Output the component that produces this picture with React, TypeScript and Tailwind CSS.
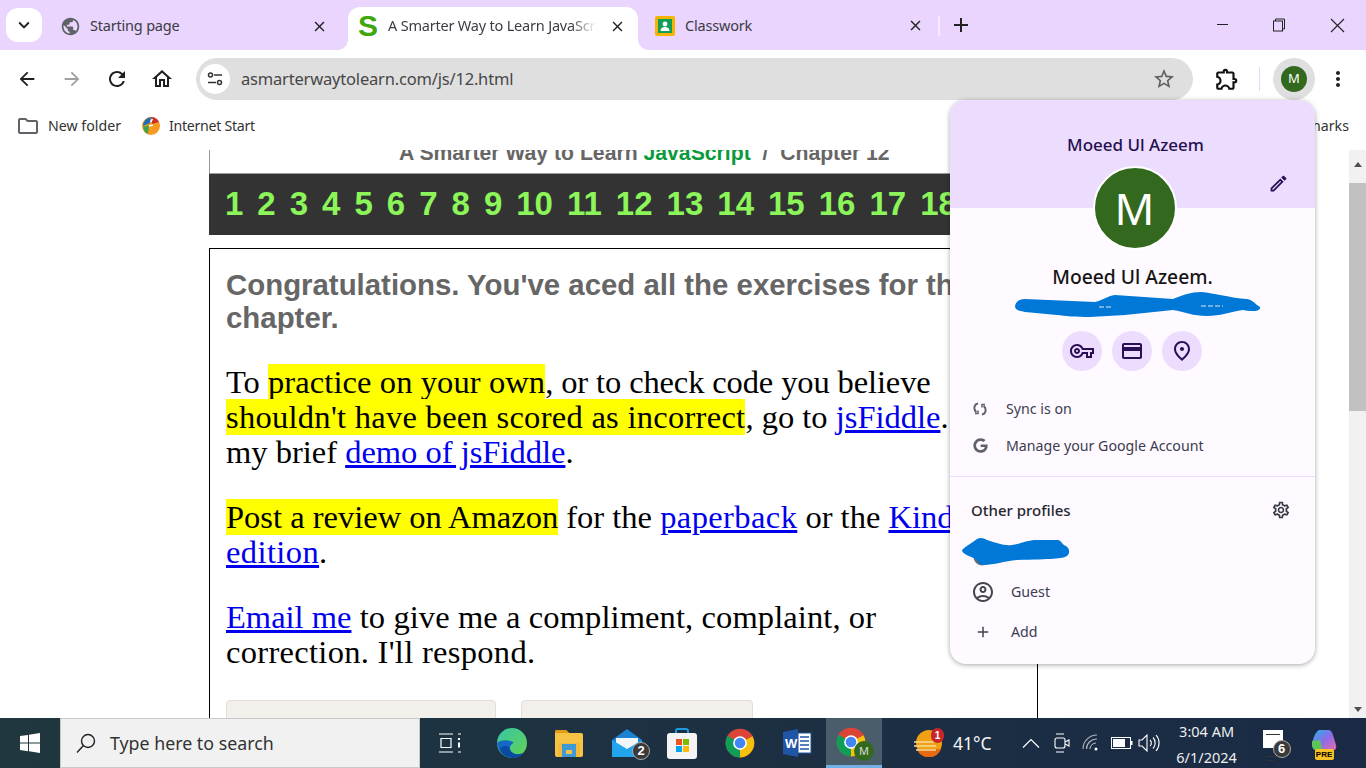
import React from "react";
import { MdArrowBack, MdArrowForward, MdRefresh, MdOutlineHome, MdStarBorder, MdOutlineExtension, MdMoreVert, MdClose, MdAdd, MdOutlineFolder, MdPublic, MdExpandMore, MdOutlineEdit, MdOutlineVpnKey, MdOutlineCreditCard, MdOutlinePlace, MdOutlineSettings, MdOutlineAccountCircle } from "react-icons/md";
import { FaGoogle } from "react-icons/fa";

const ui = "font-['Noto_Sans',sans-serif]";

function Chrome({ size = 28 }: { size?: number }) {
  return (
    <svg width={size} height={size} viewBox="0 0 48 48">
      <circle cx="24" cy="24" r="23" fill="#db4437" />
      <path d="M24 24 L44 13 A23 23 0 0 1 24 47 Z" fill="#f4c20d" />
      <path d="M24 24 L24 47 A23 23 0 0 1 4 12.5 Z" fill="#0f9d58" />
      <circle cx="24" cy="24" r="11" fill="#fff" />
      <circle cx="24" cy="24" r="8.5" fill="#4285f4" />
    </svg>
  );
}

function CircleBtn({ children }: { children: React.ReactNode }) {
  return <div className="w-[40px] h-[40px] rounded-full bg-[#ecdcfe] flex items-center justify-center text-[#2a0f57]">{children}</div>;
}

function Badge({ n, cls }: { n: string; cls: string }) {
  return <span className={`absolute w-[18px] h-[18px] rounded-full bg-[#3a3a3a] border border-[#aaa] text-white text-[13px] font-bold leading-[16px] text-center font-['Liberation_Sans',sans-serif] ${cls}`}>{n}</span>;
}

const nums = Array.from({ length: 19 }, (_, i) => i + 1);

export default function App() {
  return (
    <div className={`relative w-[1366px] h-[768px] overflow-hidden bg-white flex flex-col ${ui}`}>
      {/* Tab strip */}
      <div className="h-[50px] shrink-0 bg-[#e9d5fd] flex items-start text-[14.5px] tracking-[-0.2px] text-[#3c3c44]">
        <div className="ml-[6px] mt-[8px] w-[36px] h-[34px] rounded-[12px] bg-white flex items-center justify-center text-[#222]">
          <MdExpandMore size={22} />
        </div>
        <div className="ml-[18px] w-[288px] h-[50px] pt-[2px] flex items-center pr-[20px]">
          <MdPublic size={21} className="text-[#5f6368]" />
          <span className="ml-[9px] flex-1">Starting page</span>
          <MdClose size={17} className="text-[#222]" />
        </div>
        <div className="relative w-[290px] h-[43px] mt-[7px] bg-white rounded-t-[12px] flex items-center pl-[9px] pr-[10px] pb-[5px]">
          <span className="absolute -left-[10px] bottom-0 w-[10px] h-[10px] bg-[radial-gradient(circle_at_0_0,transparent_9.5px,white_10px)]" />
          <span className="absolute -right-[10px] bottom-0 w-[10px] h-[10px] bg-[radial-gradient(circle_at_100%_0,transparent_9.5px,white_10px)]" />
          <span className="w-[22px] text-center text-[#3fa70d] text-[30px] font-bold leading-none font-['Liberation_Sans',sans-serif]">S</span>
          <span className="ml-[9px] w-[208px] overflow-hidden whitespace-nowrap [mask-image:linear-gradient(to_right,black_88%,transparent)]">A Smarter Way to Learn JavaScript</span>
          <MdClose size={17} className="ml-[13px] text-[#222]" />
        </div>
        <div className="ml-[17px] w-[276px] h-[50px] pt-[1px] flex items-center">
          <svg width="20" height="20" viewBox="0 0 20 20">
            <rect width="20" height="20" rx="2" fill="#f4b400" />
            <rect x="3" y="3" width="14" height="14" fill="#0f9d58" />
            <circle cx="10" cy="8" r="2.4" fill="#fff" />
            <path d="M5.5 15c0-3 2-4 4.5-4s4.500 1 4.500 4z" fill="#fff" />
          </svg>
          <span className="ml-[10px] flex-1">Classwork</span>
          <MdClose size={17} className="mr-[7px] text-[#222]" />
        </div>
        <div className="ml-[7px] mt-[16px] w-[2px] h-[20px] bg-[#f4ecff]" />
        <MdAdd size={24} className="ml-[9px] mt-[13px] text-[#222]" />
        <div className="ml-auto h-[50px] flex items-center">
          <div className="w-[56px] pr-[4px] flex justify-center pb-[1px]">
            <div className="w-[11px] h-px bg-[#222]" />
          </div>
          <div className="w-[56px] pr-[2px] flex justify-center">
            <svg width="14" height="14" viewBox="0 0 14 14" fill="none" stroke="#222">
              <rect x="1.500" y="3" width="9" height="10" />
              <path d="M3.500 3V1h9v10h-2" />
            </svg>
          </div>
          <div className="w-[58px] pl-[1px] flex justify-center">
            <svg width="15" height="15" viewBox="0 0 15 15" stroke="#222" strokeWidth="1.100">
              <path d="M1 1l13 13M14 1L1 14" />
            </svg>
          </div>
        </div>
      </div>

      {/* Toolbar */}
      <div className="h-[58px] shrink-0 bg-white rounded-t-[8px] flex items-center relative">
        <MdArrowBack size={22} className="ml-[16px] text-[#1f1f1f]" />
        <MdArrowForward size={22} className="ml-[23px] text-[#a0a0a0]" />
        <MdRefresh size={24} className="ml-[22px] text-[#1f1f1f]" />
        <MdOutlineHome size={24} className="ml-[21px] text-[#1f1f1f]" />
        <div className="ml-[22px] w-[997px] h-[42px] rounded-full bg-[#dfdfdf] flex items-center pl-[4px] pr-[17px]">
          <div className="w-[30px] h-[30px] rounded-full bg-white flex items-center justify-center">
            <svg width="16" height="14" viewBox="0 0 16 14" fill="none" stroke="#333" strokeWidth="1.500">
              <circle cx="3.500" cy="3" r="2" />
              <path d="M7 3h8M1 10.500h8" />
              <circle cx="12.500" cy="10.500" r="2" />
            </svg>
          </div>
          <span className="ml-[11px] flex-1 text-[16.5px] tracking-[-0.19px] text-[#474747]">asmarterwaytolearn.com/js/12.html</span>
          <MdStarBorder size={24} className="text-[#5f5f5f]" />
        </div>
        <MdOutlineExtension size={26} className="ml-[21px] text-[#111]" />
        <div className="ml-[19px] w-px h-[24px] bg-[#e9d5fd]" />
        <div className="ml-[13px] w-[42px] h-[42px] rounded-full bg-[#dfdfdf] flex items-center justify-center">
          <div className="w-[26px] h-[26px] rounded-full bg-[#33691e] text-white text-[13px] flex items-center justify-center">M</div>
        </div>
        <MdMoreVert size={24} className="ml-[11px] text-[#222]" />
      </div>

      {/* Bookmarks */}
      <div className="h-[42px] shrink-0 bg-white flex items-center text-[14.2px] text-[#333] pb-[7px]">
        <MdOutlineFolder size={24} className="ml-[16px] text-[#5f6368]" />
        <span className="ml-[8px]">New folder</span>
        <svg width="20" height="22" viewBox="0 0 20 22" className="ml-[20px]">
          <circle cx="10" cy="11" r="9" fill="#f79a1f" />
          <path d="M10 2a9 9 0 0 1 8 5l-7 2z" fill="#c8312b" />
          <path d="M10 2a9 9 0 0 0-8 9l7-3z" fill="#1d6fb5" />
          <path d="M2 12a9 9 0 0 0 5 7l1-9z" fill="#3ba44a" />
          <path d="M9.500 7l2-3M8 11l4-1" stroke="#fff" strokeWidth="1.500" />
        </svg>
        <span className="ml-[8px] tracking-[-0.3px]">Internet Start</span>
        <span className="ml-auto mr-[17px]">All Bookmarks</span>
      </div>

      {/* Page */}
      <div className="flex-1 min-h-0 flex overflow-hidden">
        <div className="flex-1 min-w-0 overflow-hidden pl-[209px]">
          <div className="w-[829px]">
            <div className="h-[24px] border-l border-[#999] border-b overflow-hidden pl-[189px]">
              <div className="-mt-[9px] text-[21.2px] leading-[24px] whitespace-nowrap font-bold text-[#666] font-['Liberation_Sans',sans-serif]">
                A Smarter Way to Learn <span className="text-[#0a9a3c]">JavaScript</span> &nbsp;/&nbsp; Chapter 12
              </div>
            </div>
            <div className="h-[61px] bg-[#333] overflow-hidden flex items-center pl-[16px] gap-[14px] pb-[1px] text-[33px] font-bold text-[#8cf55a] font-['Liberation_Sans',sans-serif]">
              {nums.map((n) => (
                <span key={n}>{n}</span>
              ))}
            </div>
            <div className="mt-[13px] border border-black border-b-0 h-[470px] pl-[16px] pt-[19px] overflow-hidden">
              <div className="w-[790px] text-[29.4px] leading-[33px] font-bold text-[#666] font-['Liberation_Sans',sans-serif]">
                Congratulations. You've aced all the exercises for this chapter.
              </div>
              <div className="font-['Liberation_Serif',serif] text-[32.5px] leading-[35px] text-black">
                <p className="mt-[31px] whitespace-nowrap">
                  To <mark className="bg-[#ffff00] tracking-[0.1px]">practice on your own</mark><span className="tracking-[-0.12px]">, or to check code you believe</span><br />
                  <mark className="bg-[#ffff00] tracking-[0.28px]">shouldn't have been scored as incorrect</mark>, go to <a className="text-[#0000ee] underline">jsFiddle</a>. See<br />
                  my brief <a className="text-[#0000ee] underline">demo of jsFiddle</a>.
                </p>
                <p className="mt-[30px] whitespace-nowrap">
                  <mark className="bg-[#ffff00]">Post a review on Amazon</mark> for the <a className="text-[#0000ee] underline tracking-[0.4px]">paperback</a> or the <a className="text-[#0000ee] underline">Kindle</a><br />
                  <a className="text-[#0000ee] underline tracking-[0.4px]">edition</a>.
                </p>
                <p className="mt-[30px] whitespace-nowrap">
                  <a className="text-[#0000ee] underline">Email me</a><span className="tracking-[0.1px]"> to give me a compliment, complaint, or</span><br />
                  <span className="tracking-[0.3px]">correction. I'll respond.</span>
                </p>
              </div>
              <div className="mt-[30px] flex gap-[25px]">
                <div className="w-[270px] h-[40px] rounded-t-[4px] border border-[#e2dedb] bg-[#f3f0ec]" />
                <div className="w-[232px] h-[40px] rounded-t-[4px] border border-[#e2dedb] bg-[#f3f0ec]" />
              </div>
            </div>
          </div>
        </div>
        {/* Scrollbar */}
        <div className="w-[17px] shrink-0 bg-[#f1f1f1] flex flex-col items-center">
          <div className="h-[33px] w-full flex items-center justify-center pb-[4px]">
            <div className="border-x-[4px] border-x-transparent border-b-[5px] border-b-[#505050]" />
          </div>
          <div className="w-[17px] h-[228px] bg-[#c1c1c1]" />
          <div className="flex-1" />
          <div className="h-[17px] w-full flex items-center justify-center">
            <div className="border-x-[4px] border-x-transparent border-t-[5px] border-t-[#505050]" />
          </div>
        </div>
      </div>

      {/* Taskbar */}
      <div className="h-[50px] shrink-0 bg-gradient-to-r from-[#20373f] to-[#1a2a45] flex items-center text-white">
        <div className="w-[60px] flex justify-center">
          <svg width="20" height="20" viewBox="0 0 20 20" fill="#fff">
            <path d="M0 3l8-1.100V9.500H0zM9 1.700L20 0v9.500H9zM0 10.500h8v7.700L0 17zM9 10.500h11V20L9 18.300z" />
          </svg>
        </div>
        <div className="w-[360px] h-[50px] bg-[#f1f1f1] border border-[#c8c8c8] flex items-center pl-[14px] text-[#333]">
          <svg width="22" height="22" viewBox="0 0 22 22" fill="none" stroke="#222" strokeWidth="1.400">
            <circle cx="13" cy="9" r="6.500" />
            <path d="M8.500 13.500L2 20.500" />
          </svg>
          <span className="ml-[13px] text-[17.8px]">Type here to search</span>
        </div>
        <div className="ml-[18px] w-[24px] flex justify-center">
          <svg width="24" height="20" viewBox="0 0 24 20" fill="none" stroke="#fff" strokeWidth="1.200">
            <path d="M1 1h14M1 19h14M3 5.500h10v9H3zM20 1h3M20 19h3" />
            <path d="M21 5v2M21 9.500v5" strokeWidth="2" />
          </svg>
        </div>
        <div className="ml-[34px] w-[32px]">
          <svg width="32" height="32" viewBox="0 0 32 32">
            <defs>
              <linearGradient id="ed" x1="0" y1="0" x2="1" y2="1">
                <stop offset="0" stopColor="#38c6a8" />
                <stop offset="1" stopColor="#62d350" />
              </linearGradient>
            </defs>
            <circle cx="16" cy="16" r="15" fill="url(#ed)" />
            <path d="M1 16C2 26 10 31 16 31c5 0 9-2 11-5-6 3-13 1-13-5 0-3 3-5 4-5-5-4-14-3-17 0z" fill="#1668c4" />
            <path d="M4 22c2 6 8 9 13 9 4 0 8-2 10-5-7 3-13 0-14-6-3-2-7-1-9 2z" fill="#0b4a9e" />
          </svg>
        </div>
        <div className="ml-[26px]">
          <svg width="30" height="28" viewBox="0 0 30 28">
            <path d="M1 3a2 2 0 0 1 2-2h9l3 3h12a2 2 0 0 1 2 2v20a2 2 0 0 1-2 2H3a2 2 0 0 1-2-2z" fill="#f6c344" />
            <path d="M1 3a2 2 0 0 1 2-2h9l3 3H1z" fill="#e39b12" />
            <rect x="4" y="14" width="22" height="14" fill="#f2b93a" />
            <path d="M8 15h14v13H8z" fill="#3e9ad6" />
            <rect x="12" y="21" width="6" height="4" fill="#f6c344" />
          </svg>
        </div>
        <div className="ml-[28px] relative w-[30px] h-[30px]">
          <svg width="30" height="30" viewBox="0 0 30 30">
            <path d="M0 12L15 1l15 11v17H0z" fill="#1b83d6" />
            <path d="M4 10h22v7l-11 6-11-6z" fill="#f2f6fa" />
            <path d="M0 12l15 9 15-9v17H0z" fill="#23a5ee" />
          </svg>
          <Badge n="2" cls="-right-[8px] -bottom-[2px]" />
        </div>
        <div className="ml-[25px]">
          <svg width="30" height="32" viewBox="0 0 30 32">
            <path d="M9 8V4a2 2 0 0 1 2-2h8a2 2 0 0 1 2 2v4" fill="none" stroke="#1b9ae0" strokeWidth="2" />
            <rect x="0" y="6" width="30" height="26" rx="3" fill="#f4f4f4" />
            <rect x="9" y="12" width="6" height="6" fill="#f25022" />
            <rect x="16" y="12" width="6" height="6" fill="#7fba00" />
            <rect x="9" y="19" width="6" height="6" fill="#00a4ef" />
            <rect x="16" y="19" width="6" height="6" fill="#ffb900" />
          </svg>
        </div>
        <div className="ml-[28px]"><Chrome size={30} /></div>
        <div className="ml-[27px]">
          <svg width="30" height="28" viewBox="0 0 30 28">
            <path d="M16 0L1 3v22l15 3z" fill="#1f55a6" />
            <rect x="16" y="4" width="13" height="20" fill="#fff" stroke="#1f55a6" />
            <path d="M18 8h9M18 12h9M18 16h9M18 20h9" stroke="#1f55a6" strokeWidth="1.500" />
            <text x="3" y="19" fontSize="13" fontWeight="700" fill="#fff" fontFamily="Liberation Sans">W</text>
          </svg>
        </div>
        <div className="ml-[14px] w-[56px] h-[50px] bg-[#4a5d6b] border-b-[3px] border-[#72b0e8] flex items-center justify-center">
          <div className="relative w-[30px] h-[30px] -ml-[6px]">
            <Chrome size={30} />
            <span className="absolute -right-[8px] -bottom-[4px] w-[20px] h-[20px] rounded-full bg-[#33691e] text-[#dcdcdc] text-[11px] leading-[20px] text-center">M</span>
          </div>
        </div>
        <div className="ml-[32px] relative w-[28px] h-[28px]">
          <svg width="28" height="28" viewBox="0 0 28 28">
            <circle cx="15" cy="14" r="13" fill="#f2a112" />
            <path d="M3 20h24a13 13 0 0 1-22 4z" fill="#e56a12" />
            <path d="M0 13h20M0 17h22M2 21h20" stroke="#f4dba0" strokeWidth="1.500" />
          </svg>
          <span className="absolute -right-[2px] -top-[1px] w-[13px] h-[15px] rounded-full bg-[#c8262a] text-white text-[10px] font-bold leading-[15px] text-center font-['Liberation_Sans',sans-serif]">1</span>
        </div>
        <span className="ml-[11px] text-[17.500px] text-[#f4f4f4]">41°C</span>
        <svg width="18" height="10" viewBox="0 0 18 10" fill="none" stroke="#fff" strokeWidth="1.200" className="ml-[30px]">
          <path d="M1 9.500L9 1.500l8 8" />
        </svg>
        <svg width="16" height="20" viewBox="0 0 16 20" fill="none" stroke="#fff" strokeWidth="1.100" className="ml-[14px]">
          <path d="M2 1h8M2 19h8" />
          <rect x="1" y="5" width="10" height="10" rx="2" />
          <path d="M11 9l4-2v6l-4-2" />
        </svg>
        <svg width="18" height="18" viewBox="0 0 18 18" fill="none" stroke="#b4b8bd" strokeWidth="1.100" className="ml-[12px]">
          <path d="M1 15A14 14 0 0 1 15 1M4.500 15A10 10 0 0 1 15 5M8 15a6.500 6.500 0 0 1 6-6" />
          <circle cx="14" cy="15" r="1.500" fill="#fff" stroke="none" />
        </svg>
        <svg width="22" height="12" viewBox="0 0 22 12" className="ml-[11px]">
          <rect x=".5" y=".5" width="19" height="11" fill="none" stroke="#fff" />
          <rect x="2" y="2" width="12" height="8" fill="#fff" />
          <rect x="20" y="4" width="1.500" height="4" fill="#fff" />
        </svg>
        <svg width="22" height="20" viewBox="0 0 22 20" fill="none" stroke="#fff" strokeWidth="1.100" className="ml-[5px]">
          <path d="M1 7v6h3l5 5V2L4 7z" />
          <path d="M12 7a4 4 0 0 1 0 6M15 4.500a8 8 0 0 1 0 11M18 2a12 12 0 0 1 0 16" />
        </svg>
        <div className="ml-[20px] mt-[1px] w-[54px] flex flex-col items-center text-[14.500px] leading-[26px] text-[#eee] whitespace-nowrap">
          <span>3:04 AM</span>
          <span>6/1/2024</span>
        </div>
        <div className="ml-[29px] -mt-[9px] relative w-[20px] h-[18px] bg-white">
          <div className="mt-[4px] ml-[3px] w-[14px] h-[1px] bg-[#333] inline-block align-top" />
          <div className="mt-[2px] ml-[3px] w-[14px] h-[1px] bg-[#333]" />
          <div className="mt-[3px] ml-[3px] w-[8px] h-[1px] bg-[#333]" />
          <Badge n="6" cls="-right-[8px] -bottom-[10px]" />
        </div>
        <div className="ml-[28px] relative w-[26px] h-[28px]">
          <svg width="26" height="24" viewBox="0 0 26 24">
            <defs>
              <linearGradient id="co" x1="0" y1="0" x2="1" y2="1">
                <stop offset="0" stopColor="#26b5e8" />
                <stop offset=".5" stopColor="#8a6de8" />
                <stop offset="1" stopColor="#ee6aa8" />
              </linearGradient>
            </defs>
            <path d="M8 1h9c3 0 4 2 5 5l3 10c1 3-1 6-4 6h-4L8 22c-4 0-6-2-7-5 0-5 3-14 7-16z" fill="url(#co)" />
            <path d="M1 12l8-1 2 8-3 3c-4 0-6-2-7-5z" fill="#5bc45a" />
          </svg>
          <span className="absolute left-[4px] bottom-[-3px] w-[19px] h-[11px] rounded-[2px] bg-[#f7c325] text-black text-[8px] font-bold leading-[11px] text-center font-['Liberation_Sans',sans-serif]">PRE</span>
        </div>
      </div>

      {/* Profile panel */}
      <div className="absolute left-[950px] top-[100px] w-[365px] h-[564px] rounded-[16px] bg-[#fefaff] shadow-[0_1px_5px_rgba(0,0,0,0.35)] overflow-hidden flex flex-col text-[#1f1f2a]">
        <div className="relative h-[108px] shrink-0 bg-[#ecdcfe] pt-[33px] text-center text-[17px] font-medium leading-[24px] text-[#24104d]">
          <span className="relative left-[3px]">Moeed Ul Azeem</span>
          <MdOutlineEdit size={21} className="absolute left-[318px] top-[73px] text-[#2a0f57]" />
        </div>
        <div className="flex justify-center -mt-[42px] relative ml-[4px]">
          <div className="w-[84px] h-[84px] rounded-full bg-[#33691e] border-2 border-white text-white text-[44px] flex items-center justify-center">M</div>
        </div>
        <div className="mt-[15px] text-center text-[19.3px] leading-[24px] font-medium text-[#151515]">Moeed Ul Azeem.</div>
        <div className="mt-[3px] h-[26px] pl-[65px]">
          <svg width="246" height="26" viewBox="0 0 246 26">
            <path d="M0 14C1 9 5 7 10 7L80 10C88 8 92 4 100 3L158 7C168 3 176 0 186 0C200 1 215 6 232 7C238 8 240 12 245 15C246 19 238 20 228 18C215 20 205 24 192 24C178 24 170 20 158 18L110 23L75 25C60 25 50 24 42 23L10 20C4 19 0 18 0 14Z" fill="#0078d7" />
            <path d="M84 15h14M186 14h22" stroke="#e8e8e8" strokeWidth="1" strokeDasharray="5 2" />
          </svg>
        </div>
        <div className="mt-[13px] flex justify-center gap-[10px] -ml-[1px]">
          <CircleBtn><MdOutlineVpnKey size={24} /></CircleBtn>
          <CircleBtn><MdOutlineCreditCard size={24} /></CircleBtn>
          <CircleBtn><MdOutlinePlace size={24} /></CircleBtn>
        </div>
        <div className="mt-[19px] h-[37px] flex items-center pl-[22px] text-[14.2px] text-[#3c3c50]">
          <svg width="16" height="16" viewBox="0 0 16 16" fill="none" stroke="#5f6368" strokeWidth="2">
            <path d="M6 2.500C3 3 2 5.500 2.500 8c.2 1.200 1 2.500 2 3M10 13.500C13 13 14 10.500 13.500 8c-.2-1.200-1-2.500-2-3" />
            <path d="M3 12.500h3v-3M13 3.500h-3v3" strokeWidth="1.500" />
          </svg>
          <span className="ml-[18px]">Sync is on</span>
        </div>
        <div className="h-[37px] flex items-center pl-[23px] text-[14.2px] text-[#3c3c50]">
          <FaGoogle size={15} className="text-[#5f6368]" />
          <span className="ml-[18px]">Manage your Google Account</span>
        </div>
        <div className="mt-[12px] h-px bg-[#ecdcfe]" />
        <div className="mt-[21px] h-[24px] flex items-center pl-[21px] pr-[24px] text-[15px] font-medium text-[#26262e]">
          <span className="flex-1">Other profiles</span>
          <MdOutlineSettings size={20} className="text-[#3a3a45]" />
        </div>
        <div className="mt-[15px] pl-[12px] h-[29px]">
          <svg width="108" height="29" viewBox="0 0 108 29">
            <circle cx="20" cy="20" r="8.500" fill="#6a6a6a" />
            <path d="M0 13C5 8 10 6 15 2C18 0 22 1 25 3C35 6 42 9 50 8C58 7 65 3 75 3L96 3C100 4 100 8 104 9C108 12 108 16 105 19C100 22 90 22 55 23C42 24 32 28 22 28C18 28 16 26 15 23C10 19 0 18 0 13Z" fill="#0078d7" />
          </svg>
        </div>
        <div className="mt-[6px] h-[40px] flex items-center pl-[21px] text-[14.2px] text-[#3c3c50]">
          <MdOutlineAccountCircle size={24} className="text-[#45454f]" />
          <span className="ml-[16px]">Guest</span>
        </div>
        <div className="h-[40px] flex items-center pl-[24px] text-[14.2px] text-[#3c3c50]">
          <MdAdd size={18} className="text-[#45454f]" />
          <span className="ml-[19px]">Add</span>
        </div>
      </div>
    </div>
  );
}
